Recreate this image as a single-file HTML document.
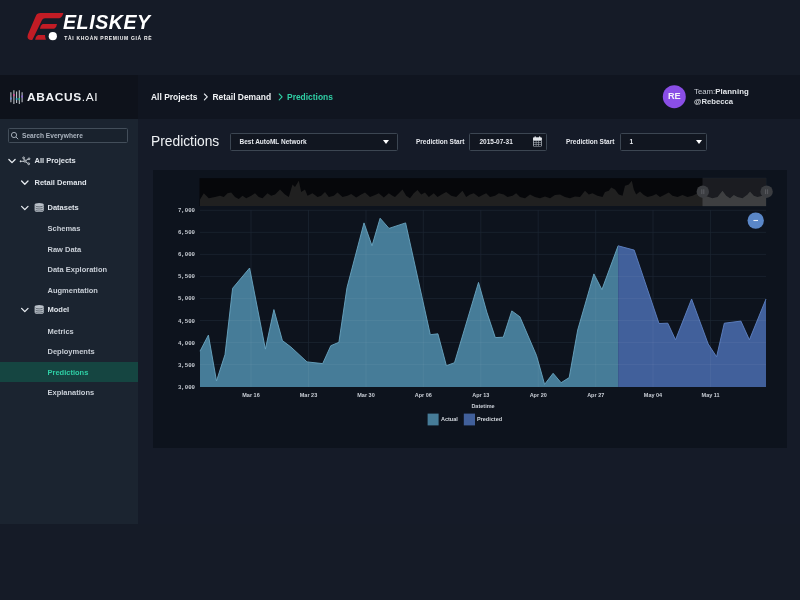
<!DOCTYPE html>
<html><head><meta charset="utf-8">
<style>
*{margin:0;padding:0;box-sizing:border-box}
html,body{width:800px;height:600px;overflow:hidden;background:#151b27;font-family:"Liberation Sans",sans-serif;}
.abs{position:absolute}
#hdr{left:0;top:75px;width:800px;height:44px;background:#101520}
#hdrL{left:0;top:75px;width:138px;height:44px;background:#0e121b}
#side{left:0;top:119px;width:138px;height:405px;background:#1b2430}
#main{left:138px;top:119px;width:662px;height:405px;background:#151b28}
#panel{left:153px;top:170px;width:634px;height:278px;background:#0d131d}
.t{position:absolute;white-space:nowrap;color:#e8ecf1;line-height:1}
.nav{font-size:7.5px;font-weight:bold;color:#dfe4ea}
.sub{font-size:7.5px;font-weight:bold;color:#c8ced6}
.ax{font-size:5.7px;color:#c6cbd2;font-family:"Liberation Mono",monospace;font-weight:bold}
.axx{font-size:5.5px;color:#c9ced6;font-weight:bold;transform:translateX(-50%)}
.box{position:absolute;border:1px solid #3c4652;background:#111620;border-radius:1.5px}
</style></head><body>
<div id="wrap" style="position:absolute;left:0;top:0;width:800px;height:600px;will-change:transform">
<div class="abs" id="hdr"></div><div class="abs" id="hdrL"></div>
<div class="abs" id="side"></div><div class="abs" id="main"></div>
<div class="abs" id="panel"></div>

<!-- Eliskey logo -->
<svg class="abs" style="left:0;top:0" width="200" height="60" viewBox="0 0 200 60">
 <g fill="#c21c25">
  <path d="M40.6,13.1 L63.3,13.1 Q62.6,17.2 59.4,18.2 L45,18.2 Q42.8,18.2 42,20 L32.6,39.4 Q32.2,40.2 31.2,40.1 L29.6,39.8 Q26.6,38.6 27.9,34.4 L35.6,16.4 Q37,13.1 40.6,13.1 Z"/>
  <path d="M42.6,23.9 L57,23.9 Q56.6,27.6 54.2,28.7 L39.9,28.7 Q40.4,25 42.6,23.9 Z"/>
  <path d="M38,35 L45,35 Q45,37.6 45.9,39.8 L35.1,39.8 Q35.6,36.2 38,35 Z"/>
 </g>
 <circle cx="52.8" cy="36.2" r="4.1" fill="#ffffff"/>
</svg>
<div class="t" style="left:63px;top:13.2px;font-size:19.6px;font-weight:bold;font-style:italic;color:#fff;letter-spacing:0.55px">ELISKEY</div>
<div class="t" style="left:64.3px;top:36.3px;font-size:5px;font-weight:bold;color:#f4f4f4;letter-spacing:0.69px">TÀI KHOẢN PREMIUM GIÁ RẺ</div>

<!-- Abacus logo -->
<svg class="abs" style="left:0;top:75px" width="138" height="44" viewBox="0 75 138 44">
 <g stroke="#c3c7ce" stroke-width="1.05" fill="none">
  <path d="M10.9,92.2 V102.2 M13.9,90.3 V104 M16.6,91.6 V103 M19.3,90.3 V104 M22.1,92.2 V102.2"/>
 </g>
 <g stroke-width="1.5">
  <path d="M13.9,94 V96.2" stroke="#d94a98"/><path d="M16.6,98 V100" stroke="#3aa6dc"/>
  <path d="M19.3,98 V100.2" stroke="#35c48a"/><path d="M10.9,97.4 V99.6" stroke="#6f8be0"/>
  <path d="M22.1,95.4 V97.6" stroke="#8a62e0"/>
 </g>
</svg>
<div class="t" style="left:27px;top:92.2px;font-size:10.6px;font-weight:bold;letter-spacing:0.55px;color:#f1f3f6;transform:scaleX(1.125);transform-origin:0 0">ABACUS<span style="font-weight:normal">.AI</span></div>

<div class="box" style="left:8px;top:128px;width:120px;height:15px;background:#19222d;border-color:#434e5a"></div>
<!-- breadcrumb -->
<div class="t" style="left:151px;top:92.6px;font-size:8.45px;font-weight:bold;color:#f0f2f5">All Projects</div>
<div class="t" style="left:212.5px;top:92.6px;font-size:8.45px;font-weight:bold;color:#f0f2f5">Retail Demand</div>
<div class="t" style="left:287px;top:92.6px;font-size:8.45px;font-weight:bold;color:#2fcfa5">Predictions</div>
<svg class="abs" style="left:0;top:0" width="800" height="600" viewBox="0 0 800 600">
 <g stroke="#e8ecf1" stroke-width="1.1" fill="none" stroke-linecap="round" stroke-linejoin="round">
  <path d="M204.4,94 L207.3,96.9 L204.4,99.8"/>
 </g>
 <path d="M279.2,94 L282.1,96.9 L279.2,99.8" stroke="#2fcfa5" stroke-width="1.1" fill="none" stroke-linecap="round" stroke-linejoin="round"/>
 <!-- avatar -->
 <circle cx="674.3" cy="96.7" r="11.5" fill="#8a4ee6"/>
 <!-- sidebar chevrons -->
 <g stroke="#e8ecf1" stroke-width="1.3" fill="none" stroke-linecap="round" stroke-linejoin="round">
  <path d="M8.9,159.5 L12,162.6 L15.1,159.5"/>
  <path d="M21.6,181 L24.8,184.2 L28,181"/>
  <path d="M21.6,206.4 L24.8,209.6 L28,206.4"/>
  <path d="M21.6,308.4 L24.8,311.6 L28,308.4"/>
 </g>
 <!-- all projects icon -->
 <g stroke="#dfe4ea" stroke-width="0.8" fill="none">
  <path d="M21.5,161.3 H24 M24.4,160 L23.8,158.8 M26,160.4 L28.2,159.2 M25.8,162 L28,163.4"/>
  <circle cx="25" cy="161.1" r="1.1"/><circle cx="23.6" cy="157.9" r="0.9"/><circle cx="29" cy="158.8" r="0.9"/><circle cx="28.7" cy="163.8" r="0.9"/><circle cx="20.7" cy="161.3" r="0.6" fill="#dfe4ea"/>
 </g>
 <!-- db icons -->
 <g fill="#b9c0c8">
  <path d="M34.6,205 a4.6,1.9 0 0 1 9.2,0 v5.2 a4.6,1.9 0 0 1 -9.2,0 Z"/>
  <path d="M34.6,307 a4.6,1.9 0 0 1 9.2,0 v5.2 a4.6,1.9 0 0 1 -9.2,0 Z"/>
 </g>
 <g stroke="#1b2430" stroke-width="0.55" fill="none">
  <path d="M35.3,205.6 a3.9,1.3 0 0 0 7.8,0 M35.3,207.7 a3.9,1.3 0 0 0 7.8,0 M35.3,209.8 a3.9,1.3 0 0 0 7.8,0"/>
  <path d="M35.3,307.6 a3.9,1.3 0 0 0 7.8,0 M35.3,309.7 a3.9,1.3 0 0 0 7.8,0 M35.3,311.8 a3.9,1.3 0 0 0 7.8,0"/>
 </g>
 <!-- search icon -->
 <g stroke="#aeb7c2" stroke-width="0.9" fill="none"><circle cx="14" cy="135" r="2.6"/><path d="M16,137 L18.2,139.2"/></g>
</svg>
<div class="t" style="left:674.3px;top:92.4px;font-size:9.2px;font-weight:bold;color:#f3eefc;transform:translateX(-50%)">RE</div>
<div class="t" style="left:694px;top:88.4px;font-size:7.8px;color:#c9ced6">Team:<b style="color:#e6e9ed;letter-spacing:0.1px">Planning</b></div>
<div class="t" style="left:694px;top:98.2px;font-size:7.7px;font-weight:bold;color:#dde1e6">@Rebecca</div>

<!-- sidebar -->
<div class="t" style="left:22px;top:132.8px;font-size:6.6px;font-weight:bold;color:#aab3be">Search Everywhere</div>
<div class="abs" style="left:0;top:361.8px;width:138px;height:20px;background:#154541"></div>
<div class="t nav" style="left:34.5px;top:157px">All Projects</div>
<div class="t nav" style="left:34.5px;top:179px">Retail Demand</div>
<div class="t nav" style="left:47.5px;top:204px">Datasets</div>
<div class="t sub" style="left:47.5px;top:224.7px">Schemas</div>
<div class="t sub" style="left:47.5px;top:245.9px">Raw Data</div>
<div class="t sub" style="left:47.5px;top:266.3px">Data Exploration</div>
<div class="t sub" style="left:47.5px;top:286.5px">Augmentation</div>
<div class="t nav" style="left:47.5px;top:306px">Model</div>
<div class="t sub" style="left:47.5px;top:327.5px">Metrics</div>
<div class="t sub" style="left:47.5px;top:348px">Deployments</div>
<div class="t sub" style="left:47.5px;top:368.6px;color:#2fcfa5">Predictions</div>
<div class="t sub" style="left:47.5px;top:389.2px">Explanations</div>

<!-- controls -->
<div class="t" style="left:151px;top:135.2px;font-size:13.8px;color:#eef1f4">Predictions</div>
<div class="box" style="left:230px;top:133px;width:168px;height:18px"></div>
<div class="t" style="left:239.5px;top:138.8px;font-size:6.5px;font-weight:bold;color:#e6e9ee">Best AutoML Network</div>
<div class="abs" style="left:382.8px;top:140.2px;border-left:3.2px solid transparent;border-right:3.2px solid transparent;border-top:4px solid #fff"></div>
<div class="t" style="left:416px;top:138.8px;font-size:6.5px;font-weight:bold;color:#e6e9ee">Prediction Start</div>
<div class="box" style="left:469px;top:133px;width:78px;height:18px"></div>
<div class="t" style="left:479.5px;top:138.8px;font-size:6.5px;font-weight:bold;color:#e6e9ee">2015-07-31</div>
<svg class="abs" style="left:531px;top:134px" width="14" height="14" viewBox="531 134 14 14"><rect x="533" y="137.4" width="8.8" height="9.2" rx="0.8" fill="#aab0b8"/><rect x="533" y="137.4" width="8.8" height="2.9" rx="0.8" fill="#e4e7eb"/><g fill="#e4e7eb"><rect x="534.6" y="136.4" width="1.2" height="1.6"/><rect x="539" y="136.4" width="1.2" height="1.6"/></g><g fill="#10151f"><rect x="533.8" y="140.9" width="2" height="1.4"/><rect x="536.4" y="140.9" width="2" height="1.4"/><rect x="539" y="140.9" width="2" height="1.4"/><rect x="533.8" y="142.8" width="2" height="1.4"/><rect x="536.4" y="142.8" width="2" height="1.4"/><rect x="539" y="142.8" width="2" height="1.4"/><rect x="533.8" y="144.7" width="2" height="1.3"/><rect x="536.4" y="144.7" width="2" height="1.3"/><rect x="539" y="144.7" width="2" height="1.3"/></g></svg>
<div class="t" style="left:566px;top:138.8px;font-size:6.5px;font-weight:bold;color:#e6e9ee">Prediction Start</div>
<div class="box" style="left:620px;top:133px;width:87px;height:18px"></div>
<div class="t" style="left:629.5px;top:138.8px;font-size:6.5px;font-weight:bold;color:#e6e9ee">1</div>
<div class="abs" style="left:695.6px;top:140.2px;border-left:3.2px solid transparent;border-right:3.2px solid transparent;border-top:4px solid #fff"></div>

<!-- chart -->
<svg class="abs" style="left:0;top:0" width="800" height="600" viewBox="0 0 800 600">
 <rect x="199.5" y="178.2" width="566.5" height="27.8" fill="#06070a"/>
 <path d="M200,206 L200.0,199.5 L203.8,193.2 L208.8,198.2 L215.0,197.0 L220.0,195.8 L223.8,197.0 L227.5,193.2 L231.2,192.5 L235.0,197.0 L238.8,199.0 L242.5,195.8 L246.2,198.2 L251.2,195.8 L255.0,193.2 L258.8,197.0 L262.5,198.2 L267.5,193.2 L271.2,195.8 L275.0,194.5 L280.0,189.5 L285.0,194.5 L288.8,197.0 L292.5,184.5 L295.0,187.0 L298.8,180.8 L301.2,192.0 L305.0,189.5 L307.5,195.8 L312.5,193.2 L317.5,197.0 L321.2,195.8 L325.0,192.0 L328.8,197.0 L333.8,195.8 L337.5,192.5 L342.5,197.0 L347.5,195.8 L351.2,194.0 L356.2,197.5 L361.2,194.5 L365.0,192.5 L370.0,197.0 L375.0,195.0 L378.8,193.2 L383.8,197.5 L388.8,193.2 L392.5,195.8 L395.0,197.0 L398.8,193.2 L402.5,189.5 L406.2,195.8 L410.0,198.2 L413.8,193.2 L417.5,190.0 L421.2,194.5 L425.0,192.5 L428.8,197.0 L433.8,193.2 L437.5,197.0 L442.5,194.0 L446.2,192.0 L451.2,195.8 L456.2,197.0 L460.0,193.2 L462.5,190.8 L466.2,197.0 L470.0,194.5 L473.8,193.2 L478.8,197.0 L482.5,195.0 L486.2,193.2 L490.0,197.0 L495.0,195.8 L498.8,193.2 L503.8,194.5 L507.5,197.0 L512.5,195.8 L516.2,193.2 L520.0,197.0 L525.0,198.2 L530.0,194.5 L535.0,197.0 L540.0,198.2 L545.0,196.5 L550.0,198.2 L555.0,195.0 L560.0,194.5 L565.0,197.0 L570.0,198.2 L575.0,196.5 L580.0,197.0 L580.0,197.0 L585.0,190.8 L588.8,194.5 L592.5,193.2 L597.5,195.8 L602.5,197.0 L605.0,192.0 L608.8,190.8 L611.2,187.5 L615.0,189.5 L618.8,194.5 L622.5,195.8 L625.0,185.8 L628.8,184.5 L631.8,180.8 L633.8,189.5 L636.2,194.5 L640.0,191.5 L643.8,195.0 L647.5,197.0 L652.5,195.8 L656.2,194.0 L660.0,197.0 L665.0,194.5 L668.8,192.5 L672.5,195.8 L677.5,197.0 L682.5,195.0 L687.5,197.0 L692.5,195.8 L697.5,193.2 L701.2,197.0 L705.0,195.8 L708.8,197.0 L712.5,198.2 L717.5,197.0 L722.5,190.8 L726.2,195.8 L730.0,198.2 L733.8,195.0 L737.5,197.0 L742.5,198.2 L747.5,194.5 L750.0,191.5 L753.8,195.8 L757.5,197.0 L762.5,195.8 L766.0,197.0 L766,206 Z" fill="#202020"/>
 <rect x="702.5" y="177.8" width="63.8" height="28.5" fill="#8a9099" opacity="0.16"/>
 <path d="M200,206 L200.0,199.5 L203.8,193.2 L208.8,198.2 L215.0,197.0 L220.0,195.8 L223.8,197.0 L227.5,193.2 L231.2,192.5 L235.0,197.0 L238.8,199.0 L242.5,195.8 L246.2,198.2 L251.2,195.8 L255.0,193.2 L258.8,197.0 L262.5,198.2 L267.5,193.2 L271.2,195.8 L275.0,194.5 L280.0,189.5 L285.0,194.5 L288.8,197.0 L292.5,184.5 L295.0,187.0 L298.8,180.8 L301.2,192.0 L305.0,189.5 L307.5,195.8 L312.5,193.2 L317.5,197.0 L321.2,195.8 L325.0,192.0 L328.8,197.0 L333.8,195.8 L337.5,192.5 L342.5,197.0 L347.5,195.8 L351.2,194.0 L356.2,197.5 L361.2,194.5 L365.0,192.5 L370.0,197.0 L375.0,195.0 L378.8,193.2 L383.8,197.5 L388.8,193.2 L392.5,195.8 L395.0,197.0 L398.8,193.2 L402.5,189.5 L406.2,195.8 L410.0,198.2 L413.8,193.2 L417.5,190.0 L421.2,194.5 L425.0,192.5 L428.8,197.0 L433.8,193.2 L437.5,197.0 L442.5,194.0 L446.2,192.0 L451.2,195.8 L456.2,197.0 L460.0,193.2 L462.5,190.8 L466.2,197.0 L470.0,194.5 L473.8,193.2 L478.8,197.0 L482.5,195.0 L486.2,193.2 L490.0,197.0 L495.0,195.8 L498.8,193.2 L503.8,194.5 L507.5,197.0 L512.5,195.8 L516.2,193.2 L520.0,197.0 L525.0,198.2 L530.0,194.5 L535.0,197.0 L540.0,198.2 L545.0,196.5 L550.0,198.2 L555.0,195.0 L560.0,194.5 L565.0,197.0 L570.0,198.2 L575.0,196.5 L580.0,197.0 L580.0,197.0 L585.0,190.8 L588.8,194.5 L592.5,193.2 L597.5,195.8 L602.5,197.0 L605.0,192.0 L608.8,190.8 L611.2,187.5 L615.0,189.5 L618.8,194.5 L622.5,195.8 L625.0,185.8 L628.8,184.5 L631.8,180.8 L633.8,189.5 L636.2,194.5 L640.0,191.5 L643.8,195.0 L647.5,197.0 L652.5,195.8 L656.2,194.0 L660.0,197.0 L665.0,194.5 L668.8,192.5 L672.5,195.8 L677.5,197.0 L682.5,195.0 L687.5,197.0 L692.5,195.8 L697.5,193.2 L701.2,197.0 L705.0,195.8 L708.8,197.0 L712.5,198.2 L717.5,197.0 L722.5,190.8 L726.2,195.8 L730.0,198.2 L733.8,195.0 L737.5,197.0 L742.5,198.2 L747.5,194.5 L750.0,191.5 L753.8,195.8 L757.5,197.0 L762.5,195.8 L766.0,197.0 L766,206 Z" fill="#ffffff" opacity="0.07" clip-path="url(#selclip)"/>
 <clipPath id="selclip"><rect x="702.5" y="177.8" width="63.8" height="28.5"/></clipPath>
 <circle cx="702.8" cy="191.7" r="6.2" fill="#3b3d41"/><circle cx="766.6" cy="191.7" r="6.2" fill="#3b3d41"/>
 <g stroke="#5d6064" stroke-width="0.9"><path d="M701.8,189.3 V194.1 M703.8,189.3 V194.1 M765.6,189.3 V194.1 M767.6,189.3 V194.1"/></g>
 <g stroke="#1d2633" stroke-width="0.7" fill="none">
  <path d="M200,210.30 H766 M200,232.34 H766 M200,254.38 H766 M200,276.42 H766 M200,298.46 H766 M200,320.50 H766 M200,342.54 H766 M200,364.58 H766"/>
  <path d="M251,210 V387 M308.5,210 V387 M366,210 V387 M423.3,210 V387 M480.8,210 V387 M538.2,210 V387 M595.7,210 V387 M653,210 V387 M710.6,210 V387"/>
 </g>
 <clipPath id="fillclip"><path d="M200.0,387 L200.0,351.2 L208.4,335.1 L216.5,381.0 L225.0,354.6 L232.6,288.3 L249.6,268.0 L265.4,349.1 L273.9,309.6 L282.4,340.6 L290.9,347.0 L307.0,361.9 L322.7,363.6 L330.8,345.7 L338.9,342.3 L347.0,287.5 L364.0,222.9 L372.0,245.8 L380.1,218.2 L389.0,228.4 L405.6,222.9 L430.3,334.7 L437.9,333.8 L446.4,365.7 L454.5,362.7 L478.5,282.4 L486.8,312.1 L495.3,337.6 L503.3,337.2 L511.8,310.9 L519.9,316.8 L536.5,355.5 L544.6,384.4 L553.1,373.3 L561.1,382.7 L569.2,377.6 L577.7,330.0 L593.9,273.9 L601.9,289.6 L618.1,245.8 L618.1,387 Z"/><path d="M618.1,387 L618.1,245.8 L634.2,250.1 L659.0,323.5 L667.8,323.2 L675.5,339.8 L691.6,299.0 L708.2,344.0 L716.6,356.8 L724.3,323.2 L740.9,321.1 L749.4,339.8 L766.0,299.0 L766.0,387 Z"/></clipPath>
 <path d="M200.0,387 L200.0,351.2 L208.4,335.1 L216.5,381.0 L225.0,354.6 L232.6,288.3 L249.6,268.0 L265.4,349.1 L273.9,309.6 L282.4,340.6 L290.9,347.0 L307.0,361.9 L322.7,363.6 L330.8,345.7 L338.9,342.3 L347.0,287.5 L364.0,222.9 L372.0,245.8 L380.1,218.2 L389.0,228.4 L405.6,222.9 L430.3,334.7 L437.9,333.8 L446.4,365.7 L454.5,362.7 L478.5,282.4 L486.8,312.1 L495.3,337.6 L503.3,337.2 L511.8,310.9 L519.9,316.8 L536.5,355.5 L544.6,384.4 L553.1,373.3 L561.1,382.7 L569.2,377.6 L577.7,330.0 L593.9,273.9 L601.9,289.6 L618.1,245.8 L618.1,387 Z" fill="#467c98"/>
 <path d="M200.0,351.2 L208.4,335.1 L216.5,381.0 L225.0,354.6 L232.6,288.3 L249.6,268.0 L265.4,349.1 L273.9,309.6 L282.4,340.6 L290.9,347.0 L307.0,361.9 L322.7,363.6 L330.8,345.7 L338.9,342.3 L347.0,287.5 L364.0,222.9 L372.0,245.8 L380.1,218.2 L389.0,228.4 L405.6,222.9 L430.3,334.7 L437.9,333.8 L446.4,365.7 L454.5,362.7 L478.5,282.4 L486.8,312.1 L495.3,337.6 L503.3,337.2 L511.8,310.9 L519.9,316.8 L536.5,355.5 L544.6,384.4 L553.1,373.3 L561.1,382.7 L569.2,377.6 L577.7,330.0 L593.9,273.9 L601.9,289.6 L618.1,245.8" fill="none" stroke="#6aa6c2" stroke-width="0.9" stroke-linejoin="round"/>
 <path d="M618.1,387 L618.1,245.8 L634.2,250.1 L659.0,323.5 L667.8,323.2 L675.5,339.8 L691.6,299.0 L708.2,344.0 L716.6,356.8 L724.3,323.2 L740.9,321.1 L749.4,339.8 L766.0,299.0 L766.0,387 Z" fill="#41609b"/>
 <path d="M618.1,245.8 L634.2,250.1 L659.0,323.5 L667.8,323.2 L675.5,339.8 L691.6,299.0 L708.2,344.0 L716.6,356.8 L724.3,323.2 L740.9,321.1 L749.4,339.8 L766.0,299.0" fill="none" stroke="#5f82c4" stroke-width="0.9" stroke-linejoin="round"/>
 <g stroke="#ffffff" stroke-opacity="0.07" stroke-width="0.7" fill="none" clip-path="url(#fillclip)">
  <path d="M200,210.30 H766 M200,232.34 H766 M200,254.38 H766 M200,276.42 H766 M200,298.46 H766 M200,320.50 H766 M200,342.54 H766 M200,364.58 H766"/>
  <path d="M251,210 V387 M308.5,210 V387 M366,210 V387 M423.3,210 V387 M480.8,210 V387 M538.2,210 V387 M595.7,210 V387 M653,210 V387 M710.6,210 V387"/>
 </g>
 <circle cx="755.7" cy="220.6" r="8.2" fill="#5a87c8"/>
 <path d="M753.4,220.5 H758" stroke="#e3ebf6" stroke-width="1.1"/>
 <rect x="427.6" y="413.6" width="11" height="11.8" fill="#467c98"/>
 <rect x="463.8" y="413.6" width="11.2" height="11.8" fill="#41609b"/>
</svg>
<div class="t ax" style="right:605px;top:208.30px">7,000</div>
<div class="t ax" style="right:605px;top:230.34px">6,500</div>
<div class="t ax" style="right:605px;top:252.38px">6,000</div>
<div class="t ax" style="right:605px;top:274.42px">5,500</div>
<div class="t ax" style="right:605px;top:296.46px">5,000</div>
<div class="t ax" style="right:605px;top:318.50px">4,500</div>
<div class="t ax" style="right:605px;top:340.54px">4,000</div>
<div class="t ax" style="right:605px;top:362.58px">3,500</div>
<div class="t ax" style="right:605px;top:384.62px">3,000</div>
<div class="t axx" style="left:251px;top:392.5px">Mar 16</div>
<div class="t axx" style="left:308.5px;top:392.5px">Mar 23</div>
<div class="t axx" style="left:366px;top:392.5px">Mar 30</div>
<div class="t axx" style="left:423.3px;top:392.5px">Apr 06</div>
<div class="t axx" style="left:480.8px;top:392.5px">Apr 13</div>
<div class="t axx" style="left:538.2px;top:392.5px">Apr 20</div>
<div class="t axx" style="left:595.7px;top:392.5px">Apr 27</div>
<div class="t axx" style="left:653px;top:392.5px">May 04</div>
<div class="t axx" style="left:710.6px;top:392.5px">May 11</div>
<div class="t axx" style="left:483px;top:403.8px">Datetime</div>
<div class="t" style="left:441px;top:416.6px;font-size:5.5px;font-weight:bold;color:#d5dae0">Actual</div>
<div class="t" style="left:477px;top:416.6px;font-size:5.5px;font-weight:bold;color:#d5dae0">Predicted</div>
</div>
</body></html>
